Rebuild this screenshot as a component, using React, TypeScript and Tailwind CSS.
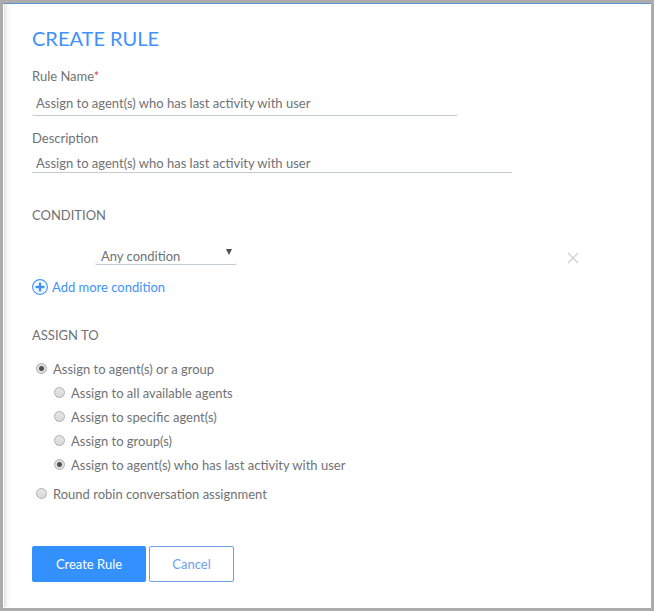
import { useState } from 'react';

type RadioProps = {
  name: string;
  label: string;
  checked: boolean;
  onSelect: () => void;
};

function RadioRow({ name, label, checked, onSelect }: RadioProps) {
  return (
    <label className="flex h-6 items-center gap-[6px]">
      <input
        type="radio"
        name={name}
        checked={checked}
        onChange={onSelect}
        className="mb-[2px] size-[11px] shrink-0 appearance-none rounded-full border border-[#b0b0b0] bg-linear-to-b from-[#e8e8e8] to-[#d8d8d8] checked:bg-[radial-gradient(circle,#505050_0_2px,#dedede_3px)]"
      />
      {label}
    </label>
  );
}

const targets = [
  'Assign to all available agents',
  'Assign to specific agent(s)',
  'Assign to group(s)',
  'Assign to agent(s) who has last activity with user',
];

export default function App() {
  const [mode, setMode] = useState('agents');
  const [target, setTarget] = useState(3);

  return (
    <div className="min-h-screen border-[3px] border-[#acacac] bg-white font-['Lato',sans-serif] text-[13px] leading-5 text-[#707275]">
      <main className="border-t border-t-[#5b93d3] bg-[linear-gradient(to_right,#ffffff_0_1px,#dedede_1px,#f7f7f7_4px,#ffffff_8px)] pr-6 pb-[25px] pl-[29px]">
        <form onSubmit={(e) => e.preventDefault()}>
          <h1 className="pt-5 text-[20px] leading-7 text-[#3f91fb]">CREATE RULE</h1>

          <label htmlFor="rule-name" className="mt-[14px] block">
            Rule Name<span className="text-[#d9455f]">*</span>
          </label>
          <input
            id="rule-name"
            type="text"
            defaultValue="Assign to agent(s) who has last activity with user"
            className="mt-[5px] block h-[25px] w-full max-w-[426px] rounded-xs border-b border-[#c4c9d4] px-1 outline-none"
          />

          <label htmlFor="description" className="mt-3 block">
            Description
          </label>
          <input
            id="description"
            type="text"
            defaultValue="Assign to agent(s) who has last activity with user"
            className="mt-[5px] block h-5 w-full max-w-[480px] border-b border-[#c4c9d4] px-1 outline-none"
          />

          <h2 className="mt-8">CONDITION</h2>
          <div className="mt-[22px] flex max-w-[547px] items-start justify-between pl-[63px]">
            <div className="relative w-[142px]">
              <select
                aria-label="Condition"
                className="block h-[18px] w-full appearance-none rounded-xs border-b border-[#c4c9d4] bg-transparent pl-[6px] leading-4 outline-none"
              >
                <option>Any condition</option>
              </select>
              <svg
                viewBox="0 0 6 6"
                className="pointer-events-none absolute top-[2px] right-[5px] size-[6px]"
                fill="#4d4f55"
                aria-hidden="true"
              >
                <path d="M0 0H6L3 6Z" />
              </svg>
            </div>
            <button type="button" aria-label="Remove condition" className="mt-[5px]">
              <svg viewBox="0 0 12 12" className="size-3" fill="none" stroke="#cdcfd6" strokeWidth="1.3">
                <path d="M1 1L11 11M11 1L1 11" />
              </svg>
            </button>
          </div>

          <button type="button" className="mt-3 flex h-5 items-center gap-1 text-[#3f91fb]">
            <svg viewBox="0 0 16 16" className="size-4" fill="none" stroke="#3f91fb" aria-hidden="true">
              <circle cx="8" cy="8" r="7.4" strokeWidth="1.1" />
              <path d="M8 3.5V12.5M3.5 8H12.5" strokeWidth="2.4" />
            </svg>
            Add more condition
          </button>

          <h2 className="mt-7">ASSIGN TO</h2>
          <div className="mt-3 pl-1">
            <RadioRow
              name="mode"
              label="Assign to agent(s) or a group"
              checked={mode === 'agents'}
              onSelect={() => setMode('agents')}
            />
            <div className="mb-[5px] pl-[18px]">
              {targets.map((label, i) => (
                <RadioRow
                  key={label}
                  name="target"
                  label={label}
                  checked={target === i}
                  onSelect={() => setTarget(i)}
                />
              ))}
            </div>
            <RadioRow
              name="mode"
              label="Round robin conversation assignment"
              checked={mode === 'robin'}
              onSelect={() => setMode('robin')}
            />
          </div>

          <div className="mt-10 flex gap-[3px]">
            <button
              type="submit"
              className="h-9 w-[114px] rounded-xs border border-[#3390fd] bg-[#3390fd] text-white"
            >
              Create Rule
            </button>
            <button
              type="button"
              className="h-9 w-[85px] rounded-xs border border-[#6f9fe8] bg-white text-[#6f9fe8]"
            >
              Cancel
            </button>
          </div>
        </form>
      </main>
    </div>
  );
}
